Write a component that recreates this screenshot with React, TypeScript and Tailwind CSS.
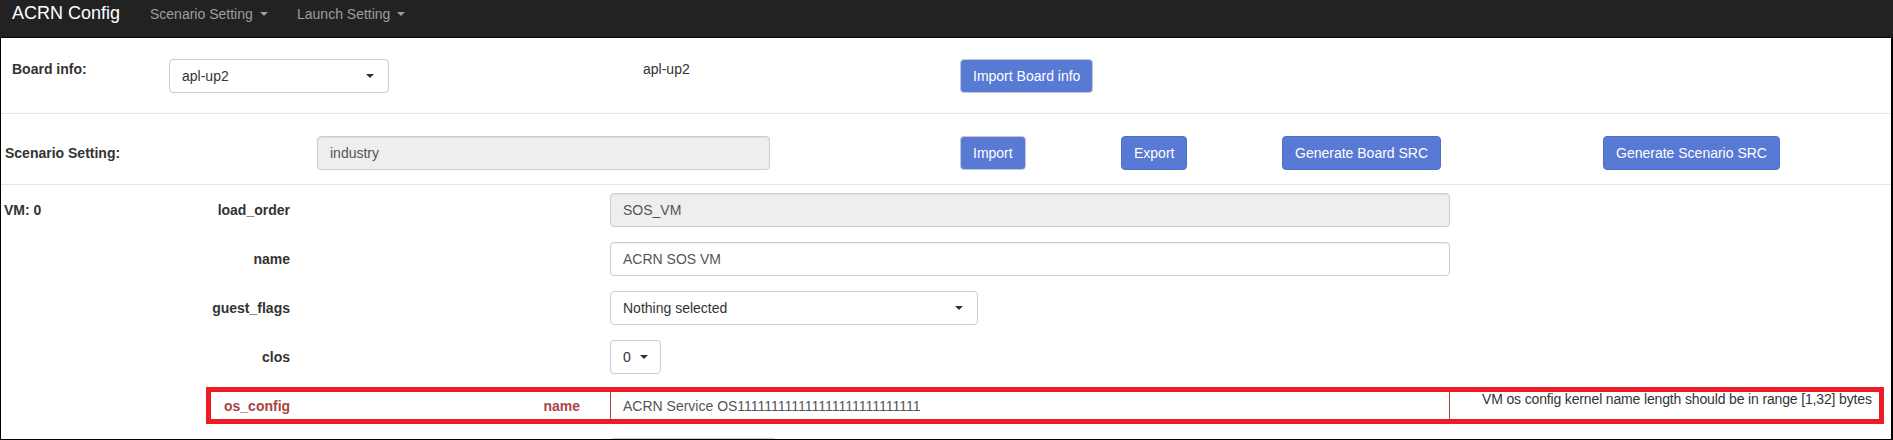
import React from "react";

const font = "font-['Liberation_Sans',Arial,Helvetica,sans-serif]";

function Caret({ color = "border-t-[#333]" }: { color?: string }) {
  return <span className={`inline-block w-0 h-0 border-x-[4px] border-t-[4px] border-x-transparent ${color}`} />;
}

function Btn({ children, light }: { children: React.ReactNode; light?: boolean }) {
  return (
    <button
      className={`h-[34px] px-[12px] rounded-[4px] border text-[14px] leading-[20px] text-white bg-[#5879d4] ${
        light ? "border-[#c4c9d6]" : "border-[#4d6ecb]"
      }`}
    >
      {children}
    </button>
  );
}

function Field({ value, disabled, w = "w-[840px]" }: { value: string; disabled?: boolean; w?: string }) {
  return (
    <div
      className={`${w} h-[34px] px-[12px] flex items-center rounded-[4px] border border-[#ccc] text-[14px] text-[#555] shadow-[inset_0_1px_1px_rgba(0,0,0,0.075)] ${
        disabled ? "bg-[#eee]" : "bg-white"
      }`}
    >
      {value}
    </div>
  );
}

function Select({ value, w }: { value: string; w: string }) {
  return (
    <div className={`${w} h-[34px] pl-[12px] pr-[14px] flex items-center justify-between rounded-[4px] border border-[#ccc] bg-white text-[14px] text-[#333]`}>
      <span>{value}</span>
      <Caret />
    </div>
  );
}

function Row({ label, children }: { label: string; children: React.ReactNode }) {
  return (
    <div className="flex items-center h-[34px]">
      <div className="w-[148px] text-right font-bold text-[#333]">{label}</div>
      <div className="w-[320px]" />
      {children}
    </div>
  );
}

export default function App() {
  return (
    <div className={`${font} relative w-[1893px] h-[440px] overflow-hidden bg-white text-[14px] leading-[20px] text-[#333]`}>
      <nav className="h-[38px] bg-[#222] border-b border-[#080808] flex items-baseline pt-[3px] pl-[12px]">
        <div className="w-[138px] text-[18px] leading-[20px] text-white">ACRN Config</div>
        <div className="w-[147px] flex items-baseline gap-[7px] text-[#9d9d9d]">
          Scenario Setting <span className="relative top-[-3px]"><Caret color="border-t-[#9d9d9d]" /></span>
        </div>
        <div className="flex items-baseline gap-[7px] text-[#9d9d9d]">
          Launch Setting <span className="relative top-[-3px]"><Caret color="border-t-[#9d9d9d]" /></span>
        </div>
      </nav>

      <div className="h-[402px] border-l border-r-2 border-b border-black flex flex-col overflow-hidden">
        {/* board info */}
        <div className="h-[76px] shrink-0 border-b border-[#e5e5e5] flex items-start pt-[21px]">
          <div className="w-[168px] pl-[11px] font-bold">Board info:</div>
          <div className="w-[474px]">
            <Select value="apl-up2" w="w-[220px]" />
          </div>
          <div className="w-[317px]">apl-up2</div>
          <Btn light>Import Board info</Btn>
        </div>

        {/* scenario setting */}
        <div className="h-[71px] shrink-0 border-b border-[#e5e5e5] flex items-center pb-[15px] pt-[22px]">
          <div className="w-[316px] pl-[4px] font-bold">Scenario Setting:</div>
          <div className="w-[643px]">
            <Field value="industry" disabled w="w-[453px]" />
          </div>
          <div className="w-[161px]">
            <Btn light>Import</Btn>
          </div>
          <div className="w-[161px]">
            <Btn>Export</Btn>
          </div>
          <div className="w-[321px]">
            <Btn>Generate Board SRC</Btn>
          </div>
          <Btn>Generate Scenario SRC</Btn>
        </div>

        {/* vm 0 */}
        <div className="flex pt-[8px]">
          <div className="w-[141px] pl-[3px] font-bold leading-[34px]">VM: 0</div>
          <div className="flex flex-col gap-[15px]">
            <Row label="load_order">
              <Field value="SOS_VM" disabled />
            </Row>
            <Row label="name">
              <Field value="ACRN SOS VM" />
            </Row>
            <Row label="guest_flags">
              <Select value="Nothing selected" w="w-[368px]" />
            </Row>
            <Row label="clos">
              <div className="w-[51px] h-[34px] pl-[12px] flex items-center gap-[9px] rounded-[4px] border border-[#ccc] bg-white text-[#333]">
                0 <Caret />
              </div>
            </Row>
            <div className="flex items-start h-[34px]">
              <div className="w-[148px] pl-[82px] font-bold text-[#a94442] leading-[34px]">os_config</div>
              <div className="w-[290px] text-right font-bold text-[#a94442] leading-[34px]">name</div>
              <div className="w-[30px]" />
              <div className="w-[840px] h-[34px] px-[12px] flex items-center rounded-[4px] border border-[#a94442] bg-white text-[#555] shadow-[inset_0_1px_1px_rgba(0,0,0,0.075)]">
                ACRN Service OS111111111111111111111111111
              </div>
              <div className="ml-[32px] whitespace-nowrap tracking-[-0.15px] text-[#333]">
                VM os config kernel name length should be in range [1,32] bytes
              </div>
            </div>
            <div className="flex">
              <div className="w-[468px]" />
              <div className="w-[167px] h-[34px] rounded-[4px] border border-[#ccc]" />
            </div>
          </div>
        </div>
      </div>

      <div className="absolute left-[206px] top-[387px] w-[1678px] h-[37px] border-[5px] border-[#ed1c24] pointer-events-none" />
    </div>
  );
}
